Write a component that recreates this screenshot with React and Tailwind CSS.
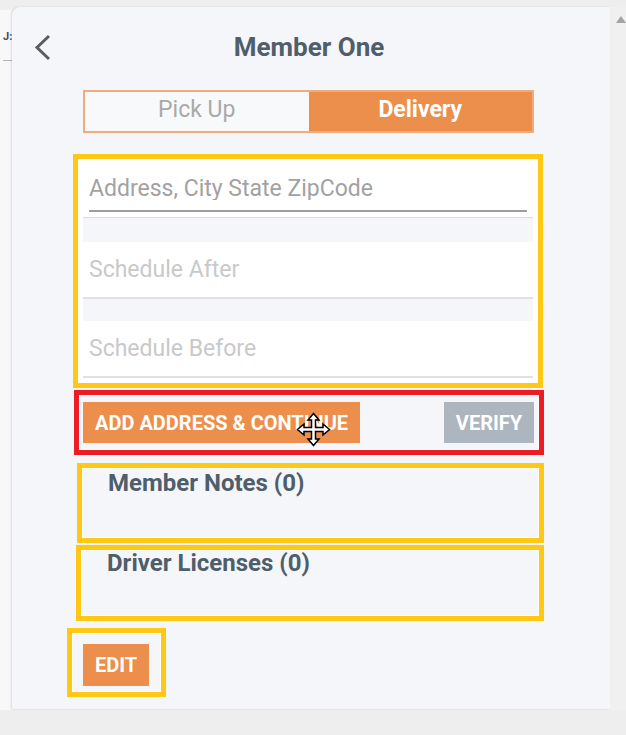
const MoveCursor = () => (
    <svg width="35" height="35" viewBox="0 0 35 35">
        <polygon
            points="17.5,1.5 23,8 19.5,8 19.5,15.5 27,15.5 27,12 33.5,17.5 27,23 27,19.5 19.5,19.5 19.5,27 23,27 17.5,33.5 12,27 15.5,27 15.5,19.5 8,19.5 8,23 1.5,17.5 8,12 8,15.5 15.5,15.5 15.5,8 12,8"
            fill="#fff"
            stroke="#000"
            strokeWidth="1.5"
            strokeLinejoin="miter"
        />
    </svg>
);

const Field = ({ placeholder, first }) => {
    if (first) {
        return (
            <div className="bg-white pt-[13px]">
                <input
                    placeholder={placeholder}
                    className="block h-[23px] w-full bg-transparent px-[6px] text-[23px] leading-[23px] outline-none placeholder:text-[#a2a2a2]"
                />
                <div className="mx-[6px] mt-[10px] h-[2px] bg-[#9d9d9d]" />
                <div className="mt-[5px] h-px bg-[#dcdcdc]" />
            </div>
        );
    }
    return (
        <div className="bg-white pt-[16px]">
            <input
                placeholder={placeholder}
                className="block h-[23px] w-full bg-transparent px-[6px] text-[23px] leading-[23px] outline-none placeholder:text-[#c9c9c9]"
            />
            <div className="mt-[16px] h-[2px] bg-[#e1e1e3]" />
        </div>
    );
};

const App = () => {
    return (
        <div className="flex h-[735px] w-[626px] items-start overflow-hidden bg-[#eeeeee] pt-[7px] font-['Roboto',sans-serif]">
            {/* page behind the panel */}
            <div className="mt-[3px] h-[700px] w-[12px] overflow-hidden bg-[#f8f8f8] pl-[3px] pt-[20px]">
                <div className="text-[11px] font-bold leading-[14px] text-[#3b4d72]">J:</div>
                <div className="mt-[16px] h-px w-[9px] bg-[#b5b5b5]" />
            </div>

            <div className="relative w-[598px] rounded-tl-[8px] bg-[#f5f6fa] pb-[12px] pt-[27px] shadow-[-1px_0_2px_rgba(0,0,0,0.12)]">
                {/* header */}
                <div className="flex h-[26px] items-center">
                    <svg className="ml-[22px] shrink-0" width="17" height="27" viewBox="0 0 17 27">
                        <path d="M15 2 L3 13.5 L15 25" fill="none" stroke="#5c5c5c" strokeWidth="3" />
                    </svg>
                    <h1 className="mr-[43px] flex-1 text-center text-[26px] font-bold leading-[26px] text-[#4f5e6b]">
                        Member One
                    </h1>
                </div>

                {/* pick up / delivery */}
                <div className="ml-[71px] mt-[30px] flex h-[43px] w-[451px] border-2 border-[#f3aa7c]">
                    <button className="flex-1 bg-[#f8f9fb] pb-[2px] text-[23px] text-[#a9a9a9]">Pick Up</button>
                    <button className="flex-1 bg-[#ec8e4c] pb-[2px] text-[23px] font-bold text-white">Delivery</button>
                </div>

                {/* address + schedule */}
                <div className="ml-[61px] mt-[21px] w-[470px] border-[5px] border-[#ffc815] bg-white p-[5px]">
                    <Field first placeholder="Address, City State ZipCode" />
                    <div className="h-[24px] bg-[#f5f6fa]" />
                    <Field placeholder="Schedule After" />
                    <div className="h-[22px] bg-[#f5f6fa]" />
                    <Field placeholder="Schedule Before" />
                </div>

                {/* actions */}
                <div className="relative ml-[62px] mt-[2px] flex w-[470px] items-center justify-between border-[5px] border-[#ec1c24] py-[7px] pl-[4px] pr-[5px] shadow-[inset_0_0_0_1px_#fff]">
                    <button className="h-[41px] w-[277px] bg-[#ec8e4c] pl-[12px] text-left text-[20px] font-bold uppercase text-white">
                        Add Address &amp; Continue
                    </button>
                    <button className="h-[41px] w-[90px] bg-[#adb5bf] text-[20px] font-bold uppercase text-white">
                        Verify
                    </button>
                    <div className="absolute left-[217px] top-[17px]">
                        <MoveCursor />
                    </div>
                </div>

                {/* notes */}
                <div className="ml-[65px] mt-[8px] h-[80px] w-[467px] border-[5px] border-[#ffc815] pl-[26px] pt-[3px] shadow-[inset_0_0_0_1px_#fff]">
                    <h2 className="text-[24px] font-bold leading-[24px] text-[#4f5e6b]">Member Notes (0)</h2>
                </div>
                <div className="ml-[64px] mt-[2px] h-[76px] w-[468px] border-[5px] border-[#ffc815] pl-[26px] pt-[1px] shadow-[inset_0_0_0_1px_#fff]">
                    <h2 className="text-[24px] font-bold leading-[24px] text-[#4f5e6b]">Driver Licenses (0)</h2>
                </div>

                {/* edit */}
                <div className="ml-[55px] mt-[7px] h-[69px] w-[99px] border-[5px] border-[#ffc815] pl-[11px] pt-[11px] shadow-[inset_0_0_0_1px_#fff]">
                    <button className="h-[42px] w-[66px] bg-[#ec8e4c] text-[20px] font-bold uppercase text-white">Edit</button>
                </div>
            </div>

            {/* scrollbar */}
            <div className="h-[703px] w-[16px] bg-[#f0f0f0] pl-[6px] pt-[9px]">
                <svg width="10" height="7" viewBox="0 0 10 7">
                    <polygon points="5,0 10,7 0,7" fill="#a3a3a3" />
                </svg>
            </div>
        </div>
    );
};

export default App;
